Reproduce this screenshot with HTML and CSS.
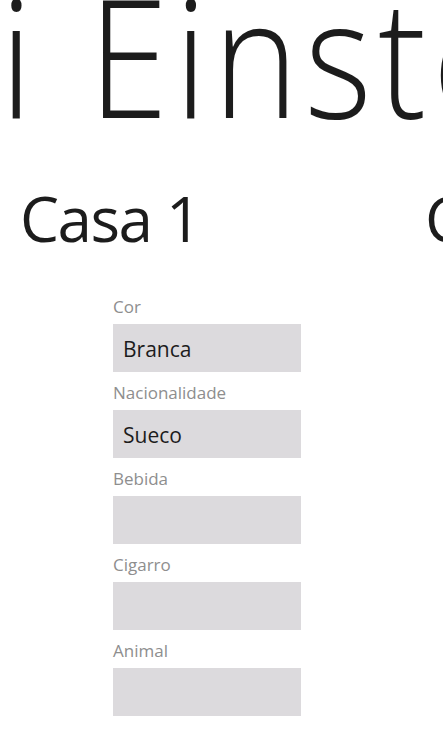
FILE: index.html
```html
<!DOCTYPE html>
<html lang="pt">
<head>
<meta charset="utf-8">
<title>Einstein</title>
<link rel="stylesheet" href="styles.css">
</head>
<body>
<div class="app">
  <div class="title"><span class="title-text">i Einstein</span></div>
  <div class="panorama">
    <section class="house">
      <h2 class="house-name">Casa 1</h2>
      <div class="fields">
        <div class="field">
          <div class="label">Cor</div>
          <div class="box">Branca</div>
        </div>
        <div class="field">
          <div class="label">Nacionalidade</div>
          <div class="box">Sueco</div>
        </div>
        <div class="field">
          <div class="label">Bebida</div>
          <div class="box"></div>
        </div>
        <div class="field">
          <div class="label">Cigarro</div>
          <div class="box"></div>
        </div>
        <div class="field">
          <div class="label">Animal</div>
          <div class="box"></div>
        </div>
      </div>
    </section>
    <section class="house">
      <h2 class="house-name">Casa 2</h2>
    </section>
  </div>
</div>
</body>
</html>
```

FILE: styles.css
```css
html, body {
  margin: 0;
  padding: 0;
  background: #ffffff;
}
body {
  width: 443px;
  height: 738px;
  overflow: hidden;
  font-family: "Open Sans", "Noto Sans", sans-serif;
  color: #1f1f1f;
}
.app {
  width: 443px;
  height: 738px;
  overflow: hidden;
}
.title {
  height: 110px;
  overflow: visible;
  white-space: nowrap;
}
.title-text {
  display: inline-block;
  font-size: 164px;
  font-weight: 340;
  line-height: 110px;
  letter-spacing: 7px;
  word-spacing: 7px;
  margin-left: 0;
  transform: scaleX(0.88);
  transform-origin: 0 0;
  color: #1c1c1c;
}
.panorama {
  display: flex;
  white-space: nowrap;
}
.house {
  flex: 0 0 405px;
  padding-left: 20px;
  box-sizing: border-box;
}
.house-name {
  margin: 68px 0 0 0;
  font-size: 62px;
  font-weight: 400;
  letter-spacing: -1.5px;
  line-height: 80px;
  height: 80px;
  color: #1c1c1c;
}
.fields {
  margin-top: 39px;
  margin-left: 93px;
  display: flex;
  flex-direction: column;
  gap: 11px;
  width: 188px;
}
.label {
  font-size: 17px;
  line-height: 20px;
  height: 20px;
  color: #8e8e8e;
  margin-bottom: 7px;
}
.box {
  height: 48px;
  background: #dcdadd;
  box-sizing: border-box;
  padding-left: 10px;
  padding-top: 2px;
  display: flex;
  align-items: center;
  font-size: 21px;
  color: #1c1c1c;
}
```
